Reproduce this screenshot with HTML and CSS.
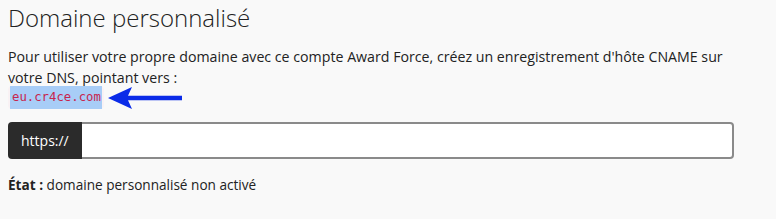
FILE: index.html
```html
<!DOCTYPE html>
<html lang="fr">
<head>
<meta charset="utf-8">
<link rel="stylesheet" href="styles.css">
</head>
<body>
<div class="page">
  <h1 class="title">Domaine personnalisé</h1>
  <p class="intro">Pour utiliser votre propre domaine avec ce compte Award Force, créez un enregistrement d'hôte CNAME sur votre DNS, pointant vers :</p>
  <div class="cname-row">
    <code class="cname"><span class="sel">eu.cr4ce.com</span></code>
    <svg class="arrow" width="76" height="24" viewBox="0 0 76 24"><path d="M0 12 L24 1 L20 9.8 L74 9.8 L74 14.2 L20 14.2 L24 23 Z" fill="#0a2be8"/></svg>
  </div>
  <div class="input-group">
    <span class="addon">https://</span>
    <input class="field" type="text">
  </div>
  <p class="status"><strong>État :</strong> domaine personnalisé non activé</p>
</div>
</body>
</html>
```

FILE: styles.css
```css
html, body {
  margin: 0;
  padding: 0;
  background: #f9f9f9;
}
.page {
  padding: 0 8px;
  font-family: "Open Sans", sans-serif;
  color: #222;
  width: 726px;
}
.title {
  margin: 0;
  padding-top: 2px;
  font-weight: 300;
  font-size: 24px;
  line-height: 32px;
  color: #222;
}
.intro {
  margin: 12px 0 0 0;
  font-size: 14.2px;
  line-height: 21px;
}
.cname-row {
  display: flex;
  align-items: center;
  height: 23px;
  margin-top: -2px;
}
.cname {
  font-family: "DejaVu Sans Mono", monospace;
  font-size: 12.3px;
  color: #c7254e;
  background: #f9f2f4;
  border-radius: 4px;
  padding: 0 2px;
  line-height: 22px;
}
.sel {
  display: inline-block;
  background: #a8cdf7;
  padding: 0 1px 0 2px;
  line-height: 23px;
}
.arrow {
  display: block;
  margin-left: 4px;
}
.input-group {
  display: flex;
  margin-top: 13px;
  height: 37px;
}
.addon {
  display: flex;
  align-items: center;
  background: #2b2b2b;
  color: #fff;
  font-size: 14px;
  padding: 0 13px;
  border-radius: 4px 0 0 4px;
}
.field {
  flex: 1;
  margin: 0;
  border: 2px solid #8a8a8a;
  border-left: none;
  border-radius: 0 4px 4px 0;
  background: #fff;
  outline: none;
}
.status {
  margin: 16px 0 0 0;
  font-size: 13.6px;
  line-height: 19px;
}
```
